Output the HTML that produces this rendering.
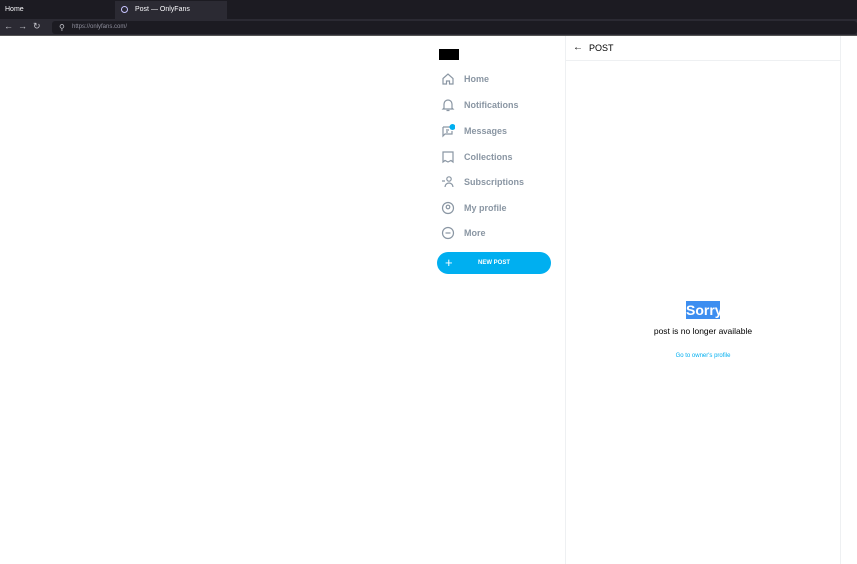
<!DOCTYPE html>
<html><head><style>
*{margin:0;padding:0;box-sizing:border-box}
body{width:857px;height:564px;overflow:hidden;background:#fff;font-family:"Liberation Sans",sans-serif;position:relative}
.top{position:absolute;left:0;top:0;width:857px;height:19px;background:#1c1b22}
.tab{position:absolute;left:115px;top:1px;width:112px;height:18px;background:#2b2a33;color:#fbfbfe;font-size:7px;line-height:18px;padding-left:20px}
.tab i{position:absolute;left:6px;top:5px;width:7px;height:7px;border:1.5px solid #c7c3ff;border-radius:50%}
.home{position:absolute;left:5px;top:0;color:#fbfbfe;font-size:7px;line-height:19px}
.nav{position:absolute;left:0;top:19px;width:857px;height:17px;background:#2b2a33;border-bottom:1px solid #555}
.url{position:absolute;left:52px;top:2px;width:805px;height:13px;background:#1c1b22;border-radius:3px;color:#8f8f9d;font-size:6px;line-height:13px;padding-left:20px}
.nav span{position:absolute;top:2px;color:#c5c5cc;font-size:9px}
.menu{position:absolute;left:440px;font-size:9px;color:#8a96a3;font-weight:bold}
.menu div{position:absolute;left:0;width:160px;height:16px;line-height:16px;padding-left:24px}
.menu svg{position:absolute;left:1px;top:1px}
.btn{position:absolute;left:437px;top:252px;width:114px;height:22px;border-radius:11px;background:#00aff0;color:#fff;font-size:6px;font-weight:bold;text-align:center;line-height:22px}
.btn b{position:absolute;left:8px;top:0;font-size:13px;font-weight:normal}
</style></head><body>
<div class="top"><div class="home">Home</div><div class="tab"><i></i>Post — OnlyFans</div></div>
<div class="nav"><span style="left:4px">←</span><span style="left:18px">→</span><span style="left:33px">↻</span><div class="url"><span style="left:7px;top:0;font-size:8px">⚲</span>https://onlyfans.com/</div></div>
<div style="position:absolute;left:439px;top:49px;width:20px;height:11px;background:#000"></div>
<div style="position:absolute;left:565px;top:36px;width:1px;height:528px;background:#eef0f2"></div>
<div style="position:absolute;left:840px;top:36px;width:1px;height:528px;background:#eef0f2"></div>
<div style="position:absolute;left:566px;top:60px;width:274px;height:1px;background:#eef0f2"></div>
<div style="position:absolute;left:573px;top:42px;font-size:10px;color:#000">←</div>
<div style="position:absolute;left:589px;top:43px;font-size:9px;color:#000">POST</div>
<div class="menu">
<div style="top:71px"><svg width="14" height="14" viewBox="0 0 14 14" fill="none" stroke="#8a96a3" stroke-width="1.2"><path d="M2 6.5L7 2l5 4.5V12H8.5V9h-3v3H2z"/></svg>Home</div>
<div style="top:97px"><svg width="14" height="14" viewBox="0 0 14 14" fill="none" stroke="#8a96a3" stroke-width="1.2"><path d="M3 10V6a4 4 0 018 0v4l1 1H2zM5.5 12.5h3"/></svg>Notifications</div>
<div style="top:123px"><svg width="14" height="14" viewBox="0 0 14 14" fill="none" stroke="#8a96a3" stroke-width="1.2"><path d="M2 3h7M2 3v9l2-2h7V7M5 6h3M5 8h2"/><circle cx="11.5" cy="3" r="3" fill="#00aff0" stroke="none"/></svg>Messages</div>
<div style="top:149px"><svg width="14" height="14" viewBox="0 0 14 14" fill="none" stroke="#8a96a3" stroke-width="1.2"><path d="M2 2h10v10l-2-1.5-3 1.5-3-1.5L2 12z"/></svg>Collections</div>
<div style="top:174px"><svg width="14" height="14" viewBox="0 0 14 14" fill="none" stroke="#8a96a3" stroke-width="1.2"><circle cx="8" cy="4" r="2.2"/><path d="M4 12a4 4 0 018 0M1 6h3"/></svg>Subscriptions</div>
<div style="top:200px"><svg width="14" height="14" viewBox="0 0 14 14" fill="none" stroke="#8a96a3" stroke-width="1.2"><circle cx="7" cy="7" r="5.5"/><circle cx="7" cy="6" r="1.8"/></svg>My profile</div>
<div style="top:225px"><svg width="14" height="14" viewBox="0 0 14 14" fill="none" stroke="#8a96a3" stroke-width="1.2"><circle cx="7" cy="7" r="5.5"/><path d="M4.5 7h5"/></svg>More</div>
</div>
<div class="btn"><b>+</b>NEW POST</div>
<div style="position:absolute;left:686px;top:301px;width:34px;height:18px;background:#3d8ef0;color:#fff;font-size:14px;font-weight:bold;line-height:18px;text-align:center">Sorry</div>
<div style="position:absolute;left:566px;top:326px;width:274px;text-align:center;font-size:8.5px;color:#000">post is no longer available</div>
<div style="position:absolute;left:566px;top:353px;width:274px;text-align:center;font-size:6px;color:#00aff0">Go to owner's profile</div>
</body></html>
